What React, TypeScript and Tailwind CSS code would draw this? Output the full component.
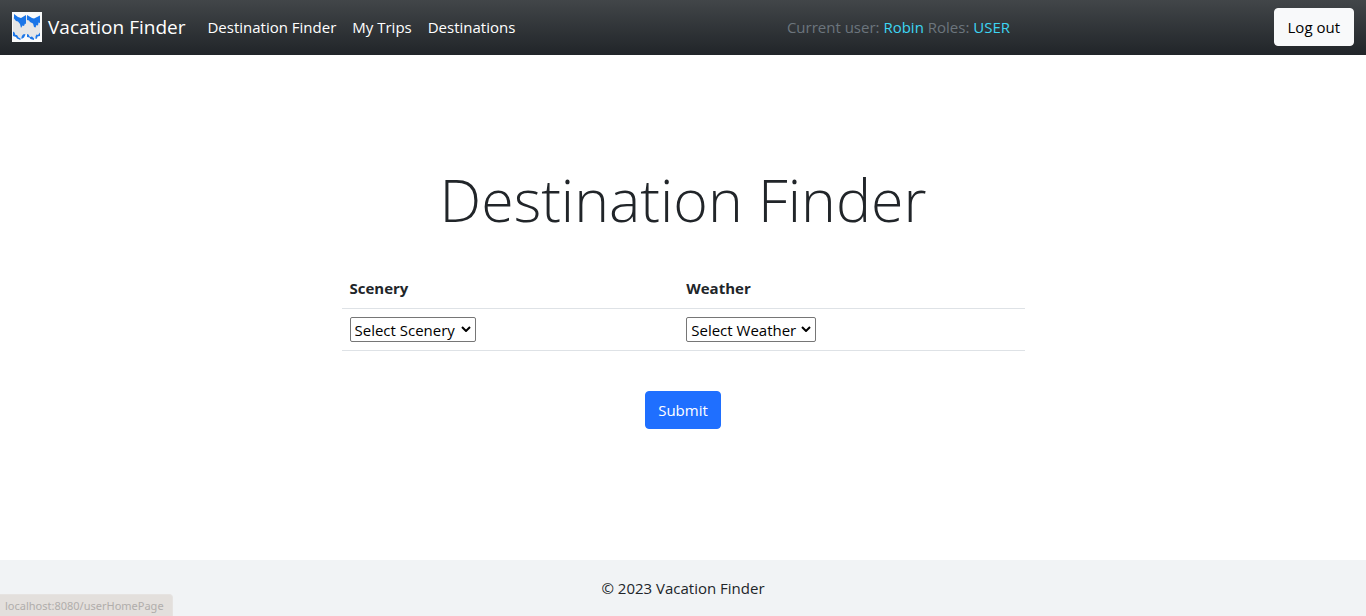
import React from 'react';

const navLinks = ['Destination Finder', 'My Trips', 'Destinations'];

function MapLogo() {
  return (
    <svg viewBox="0 0 30 30" className="size-[30px] shrink-0" aria-hidden="true">
      <rect width="30" height="30" fill="#f9fafa" />
      <path d="M1 5 8 8 14 4 21 8 28 4V22L22 27 15 22 8 27 1 22Z" fill="#e5e6e7" />
      <path d="M2 2 6 5 9 6 14 3V12L13 11.500 12 14 10.500 13.500 9 16 8 12 6 9.500 4 9 2 6.500Z" fill="#1b76e8" />
      <path d="M15 3 20 6 22 6.500 28 3.500V11L26.500 10.500 26 13.500 24.500 13 23.500 15.500 22 15 21 11.500 18 10 17 8.500 15 8Z" fill="#1b76e8" />
      <path d="M1 19.500 2.500 20.500 3.500 23 5 23 6.500 25.500 8.500 26.500V28L5 26.500 4 25 1 24ZM9.500 25 10.500 23 12 22 13.500 22.500 12 25.500 9.500 27ZM15 22 16.500 22.500 18 25 20 24.500 22 26.500V28L18.500 27 17.500 25.500 15 25ZM23.500 24.500 24.500 22.500 26 23 28 20.500V24L25.500 24.500 25 26.500 23.500 27Z" fill="#1b76e8" />
    </svg>
  );
}

type PickerProps = { id: string; label: string; options: string[]; className: string };

function Picker({ id, label, options, className }: PickerProps) {
  return (
    <span className="relative inline-flex align-top">
      <select
        id={id}
        defaultValue=""
        className={`h-[25px] appearance-none rounded-xs border border-[#767676] bg-white pl-1 text-black ${className}`}
      >
        <option value="">{label}</option>
        {options.map((option) => (
          <option key={option}>{option}</option>
        ))}
      </select>
      <svg viewBox="0 0 10 6" className="pointer-events-none absolute top-[9px] right-[5px] h-1.5 w-2.5" aria-hidden="true">
        <path d="M1 1 5 5 9 1" fill="none" stroke="#000" strokeWidth="2" />
      </svg>
    </span>
  );
}

export default function App() {
  return (
    <div className="flex min-h-screen flex-col bg-white font-['Open_Sans','Noto_Sans',sans-serif] text-[15px] leading-6 text-[#212529]">
      <header className="flex items-center justify-between bg-linear-to-b from-[#424649] to-[#212529] px-3 pt-2 pb-[9px] text-white">
        <div className="flex items-center">
          <a href="#home" className="mr-3.5 flex items-center gap-1.5 text-[19px] leading-[30px]">
            <MapLogo />
            Vacation Finder
          </a>
          <nav className="flex">
            {navLinks.map((link) => (
              <a key={link} href="#nav" className="px-2">
                {link}
              </a>
            ))}
          </nav>
        </div>
        <p className="text-[#6c757d]">
          Current user: <span className="text-[#3dd5f3]">Robin</span> Roles: <span className="text-[#3dd5f3]">USER</span>
        </p>
        <button type="button" className="rounded-sm border border-[#f8f9fa] bg-[#f8f9fa] px-[13px] py-1.5 text-black">
          Log out
        </button>
      </header>

      <main className="flex flex-1 flex-col items-center justify-center pb-[25px]">
        <h1 className="mb-[31px] text-[59px] leading-[76px] font-light">Destination Finder</h1>
        <form className="flex w-1/2 flex-col items-center" onSubmit={(event) => event.preventDefault()}>
          <table className="w-full border-collapse text-left">
            <thead>
              <tr className="border-b border-[#dee2e6]">
                <th className="p-2 font-bold">
                  <label htmlFor="scenery">Scenery</label>
                </th>
                <th className="p-2 font-bold">
                  <label htmlFor="weather">Weather</label>
                </th>
              </tr>
            </thead>
            <tbody>
              <tr className="border-b border-[#dee2e6]">
                <td className="p-2">
                  <Picker id="scenery" label="Select Scenery" options={['Beach', 'Mountains', 'City']} className="w-[126px]" />
                </td>
                <td className="p-2">
                  <Picker id="weather" label="Select Weather" options={['Sunny', 'Mild', 'Snowy']} className="w-[130px]" />
                </td>
              </tr>
            </tbody>
          </table>
          <button type="submit" className="mt-10 rounded-sm border border-[#1f6fff] bg-[#1f6fff] px-3 py-1.5 text-white">
            Submit
          </button>
        </form>
      </main>

      <footer className="bg-[#f1f3f5] py-4 text-center">© 2023 Vacation Finder</footer>

      <div className="fixed bottom-0 left-0 rounded-tr-sm border-t border-r border-[#e6e3e1] bg-[#e3dfdc] pt-px pr-2 pl-[5px] font-['Noto_Sans',sans-serif] text-[11px] leading-5 text-[#b0adab]">
        localhost:8080/userHomePage
      </div>
    </div>
  );
}
